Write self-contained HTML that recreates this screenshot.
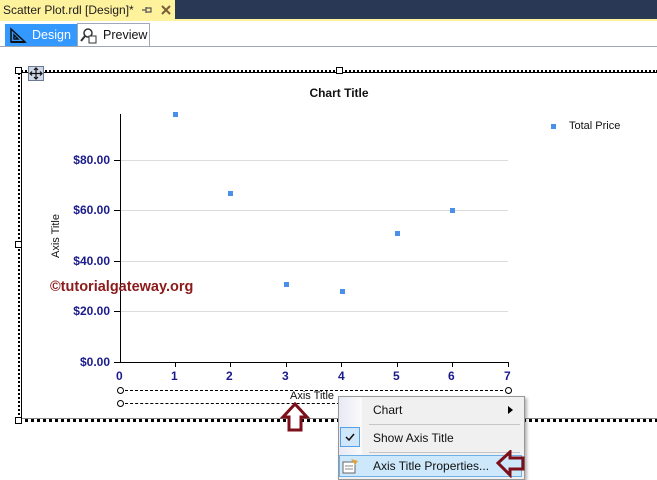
<!DOCTYPE html>
<html><head><style>
body{margin:0;width:657px;height:479px;position:relative;overflow:hidden;background:#fff;font-family:"Liberation Sans",sans-serif;}
.a{position:absolute}
.yl{color:#1a1a8c;font-weight:bold;font-size:12px;}
.pt{position:absolute;width:5px;height:5px;background:#4a8fe8}
.grid{position:absolute;left:120px;width:388px;height:1px;background:#dcdcdc}
.m{font-size:12px;color:#111;font-family:"Liberation Sans",sans-serif}
</style></head><body>
<div class="a" style="left:0;top:0;width:657px;height:20px;background:#293955"></div>
<div class="a" style="left:0;top:0;width:175px;height:20px;background:#fff29d"></div>
<div class="a" style="left:0;top:19px;width:657px;height:2px;background:#fff29d"></div>
<div class="a" style="left:3px;top:3px;font-size:12px;color:#1e1e1e">Scatter Plot.rdl [Design]*</div>
<svg class="a" style="left:141px;top:5px" width="12" height="10"><path d="M1 5 H5 M5 2 V8 M5 3 H10 V7 H5" fill="none" stroke="#555" stroke-width="1.2"/></svg>
<svg class="a" style="left:160px;top:4px" width="12" height="12"><path d="M2 2 L10 10 M10 2 L2 10" stroke="#7a5c3a" stroke-width="2"/></svg>
<div class="a" style="left:5px;top:24px;width:72px;height:23px;background:#3399ff"></div>
<svg class="a" style="left:9px;top:27px" width="18" height="17"><path d="M2 2 L2 15 L16 15 Z M5 8 L5 12 L9 12 Z" fill="none" stroke="#111" stroke-width="1.5"/><path d="M2 15 H16" stroke="#111" stroke-width="2"/></svg>
<div class="a" style="left:32px;top:28px;color:#fff;font-size:12.5px">Design</div>
<div class="a" style="left:77px;top:23px;width:73px;height:24px;border:1px solid #a0a8b8;border-bottom:none;background:#fff;box-sizing:border-box"></div>
<svg class="a" style="left:80px;top:26px" width="18" height="18"><circle cx="8" cy="7" r="4" fill="none" stroke="#333" stroke-width="1.5"/><path d="M5 10 L1 15" stroke="#333" stroke-width="2"/><rect x="9" y="10" width="7" height="7" fill="#fff" stroke="#333"/></svg>
<div class="a" style="left:103px;top:28px;color:#111;font-size:12.5px">Preview</div>
<div class="a" style="left:0;top:46px;width:657px;height:1px;background:#a0a8b8"></div>

<div class="a" style="left:18px;top:70px;width:640px;height:0;border-top:2px dotted #000"></div>
<div class="a" style="left:20px;top:72px;width:640px;height:1px;background:#000"></div>
<div class="a" style="left:18px;top:70px;width:0;height:352px;border-left:2px dotted #000"></div>
<div class="a" style="left:21px;top:72px;width:1px;height:348px;background:#000"></div>
<div class="a" style="left:18px;top:419px;width:640px;height:0;border-top:3px dotted #000"></div>
<div class="a" style="left:22px;top:418px;width:640px;height:1px;background:#888"></div>
<div class="a" style="left:15px;top:67px;width:5px;height:5px;border:1px solid #000;background:#fff"></div>
<div class="a" style="left:15px;top:241px;width:5px;height:5px;border:1px solid #000;background:#fff"></div>
<div class="a" style="left:15px;top:417px;width:5px;height:5px;border:1px solid #000;background:#fff"></div>
<div class="a" style="left:336px;top:67px;width:5px;height:5px;border:1px solid #000;background:#fff"></div>
<div class="a" style="left:28px;top:66px;width:14px;height:13px;background:#cfd8e6;border:1px solid #6b7a90"></div>
<svg class="a" style="left:29px;top:67px" width="14" height="13"><path d="M7 1 V12 M1 6.5 H13 M5 3 L7 1 L9 3 M5 10 L7 12 L9 10 M3 4.5 L1 6.5 L3 8.5 M11 4.5 L13 6.5 L11 8.5" fill="none" stroke="#111" stroke-width="1.2"/></svg>

<div class="a" style="left:0;top:86px;width:678px;text-align:center;font-weight:bold;font-size:12px;color:#111">Chart Title</div>
<div class="grid" style="top:160px"></div>
<div class="grid" style="top:210px"></div>
<div class="grid" style="top:261px"></div>
<div class="grid" style="top:311px"></div>
<div class="a" style="left:120px;top:114px;width:1px;height:249px;background:#000"></div>
<div class="a" style="left:114px;top:362px;width:395px;height:1px;background:#000"></div>
<div class="a yl" style="left:58px;top:153px;width:52px;text-align:right">$80.00</div>
<div class="a yl" style="left:58px;top:203px;width:52px;text-align:right">$60.00</div>
<div class="a yl" style="left:58px;top:254px;width:52px;text-align:right">$40.00</div>
<div class="a yl" style="left:58px;top:304px;width:52px;text-align:right">$20.00</div>
<div class="a yl" style="left:58px;top:355px;width:52px;text-align:right">$0.00</div>
<div class="a" style="left:114px;top:160px;width:6px;height:1px;background:#000"></div>
<div class="a" style="left:114px;top:210px;width:6px;height:1px;background:#000"></div>
<div class="a" style="left:114px;top:261px;width:6px;height:1px;background:#000"></div>
<div class="a" style="left:114px;top:311px;width:6px;height:1px;background:#000"></div>
<div class="a yl" style="left:116px;top:369px">0</div>
<div class="a yl" style="left:171px;top:369px">1</div>
<div class="a yl" style="left:226px;top:369px">2</div>
<div class="a yl" style="left:282px;top:369px">3</div>
<div class="a yl" style="left:338px;top:369px">4</div>
<div class="a yl" style="left:393px;top:369px">5</div>
<div class="a yl" style="left:448px;top:369px">6</div>
<div class="a yl" style="left:504px;top:369px">7</div>
<div class="a" style="left:175px;top:362px;width:1px;height:5px;background:#000"></div>
<div class="a" style="left:230px;top:362px;width:1px;height:5px;background:#000"></div>
<div class="a" style="left:286px;top:362px;width:1px;height:5px;background:#000"></div>
<div class="a" style="left:341px;top:362px;width:1px;height:5px;background:#000"></div>
<div class="a" style="left:397px;top:362px;width:1px;height:5px;background:#000"></div>
<div class="a" style="left:452px;top:362px;width:1px;height:5px;background:#000"></div>
<div class="a" style="left:508px;top:362px;width:1px;height:5px;background:#000"></div>
<div class="a" style="left:26px;top:230px;transform:rotate(-90deg);font-size:11px;color:#111;width:60px;text-align:center">Axis Title</div>
<div class="pt" style="left:173px;top:112px"></div>
<div class="pt" style="left:228px;top:191px"></div>
<div class="pt" style="left:284px;top:282px"></div>
<div class="pt" style="left:340px;top:289px"></div>
<div class="pt" style="left:395px;top:231px"></div>
<div class="pt" style="left:450px;top:208px"></div>
<div class="pt" style="left:551px;top:124px"></div>
<div class="a" style="left:569px;top:120px;font-size:11px;color:#111">Total Price</div>
<div class="a" style="left:50px;top:279px;font-size:14.5px;font-weight:bold;color:#8b1a1a">©tutorialgateway.org</div>
<div class="a" style="left:120px;top:390px;width:388px;border-top:1px dashed #000"></div>
<div class="a" style="left:120px;top:403px;width:220px;border-top:1px dashed #000"></div>
<div class="a" style="left:117px;top:387px;width:5px;height:5px;border:1px solid #000;border-radius:50%;background:#fff"></div>
<div class="a" style="left:117px;top:400px;width:5px;height:5px;border:1px solid #000;border-radius:50%;background:#fff"></div>
<div class="a" style="left:505px;top:387px;width:5px;height:5px;border:1px solid #000;border-radius:50%;background:#fff"></div>
<div class="a" style="left:290px;top:390px;font-size:11px;color:#111">Axis Title</div>
<svg class="a" style="left:280px;top:402px" width="34" height="30"><path d="M15 2 L3 15 H9 V28 H21 V15 H27 Z" fill="#fff" stroke="#7b0f1a" stroke-width="3"/></svg>
<div class="a" style="left:338px;top:396px;width:185px;height:82px;background:#f0f0f0;border:1px solid #979797;box-shadow:2px 2px 3px rgba(0,0,0,.3)"></div>
<div class="a" style="left:339px;top:397px;width:23px;height:80px;background:linear-gradient(90deg,#e8eaf4,#fafafa)"></div>
<div class="a m" style="left:373px;top:403px">Chart</div>
<svg class="a" style="left:508px;top:406px" width="6" height="8"><path d="M0 0 L5 4 L0 8 Z" fill="#000"/></svg>
<div class="a" style="left:369px;top:424px;width:151px;height:1px;background:#c5c5c5"></div>
<div class="a" style="left:340px;top:427px;width:20px;height:20px;background:#cfe6fb;border:1px solid #56a0e8;box-sizing:border-box"></div>
<svg class="a" style="left:345px;top:433px" width="10" height="8"><path d="M1 4 L4 7 L9 1" fill="none" stroke="#111" stroke-width="1.5"/></svg>
<div class="a m" style="left:373px;top:431px">Show Axis Title</div>
<div class="a" style="left:369px;top:452px;width:151px;height:1px;background:#c5c5c5"></div>
<div class="a" style="left:339px;top:455px;width:183px;height:22px;background:#cce8fa;border:1px solid #6fb1e6;box-sizing:border-box"></div>
<svg class="a" style="left:342px;top:458px" width="17" height="16"><rect x="1" y="4" width="12" height="11" fill="#fff" stroke="#666"/><path d="M3 8 H11 M3 11 H11" stroke="#888"/><path d="M9 1 L16 3 L13 7 Z" fill="#e0a040"/></svg>
<div class="a m" style="left:373px;top:459px">Axis Title Properties...</div>
<svg class="a" style="left:495px;top:450px" width="32" height="28"><path d="M3 13 L15 2 V8 H28 V19 H15 V25 Z" fill="none" stroke="#7b0f1a" stroke-width="3"/></svg>
</body></html>
